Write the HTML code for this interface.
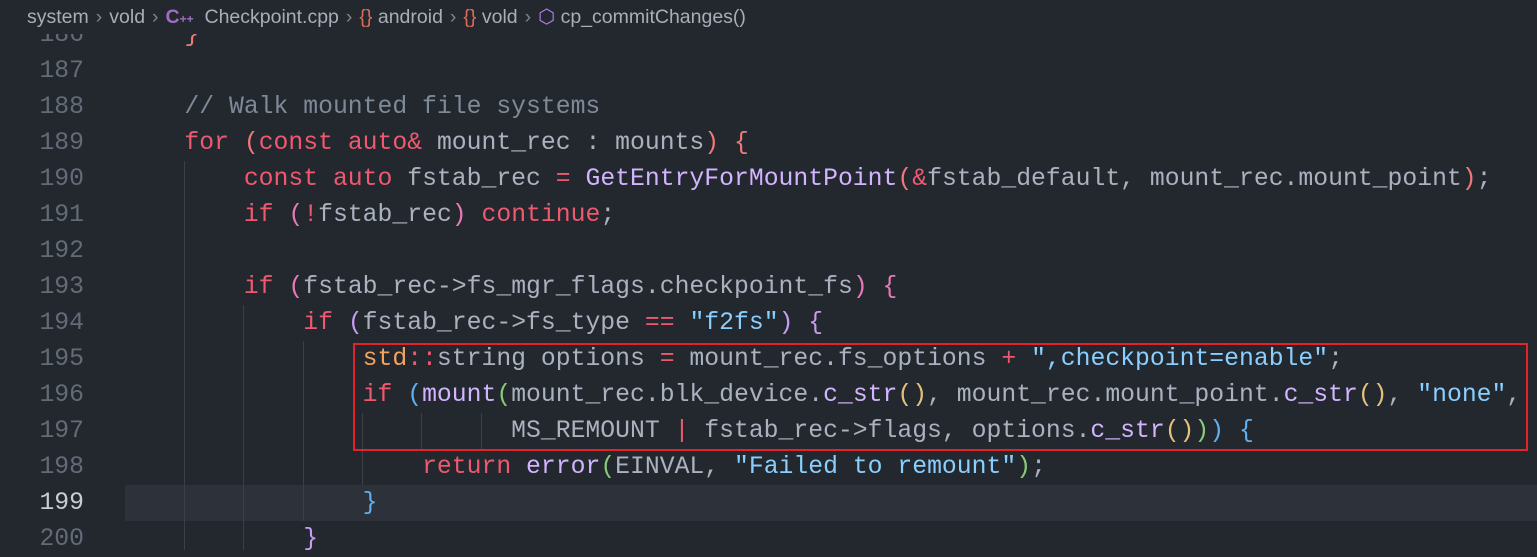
<!DOCTYPE html>
<html><head><meta charset="utf-8"><style>
body{margin:0;width:1537px;height:550px;background:#23272e;overflow:hidden;position:relative;font-family:"Liberation Mono",monospace}
.hdr{position:absolute;left:0;top:0;width:1537px;height:34px;background:#23272e;z-index:5;font-family:"Liberation Sans",sans-serif;font-size:19.5px;color:#a8aeb8;line-height:34px;white-space:pre;padding-left:27px;box-sizing:border-box}
.hdr .s{color:#7d8590;padding:0 7px}
.ln{position:absolute;left:0;width:84px;text-align:right;color:#636b78;font-size:24.75px;line-height:36px;height:36px}
.cd{position:absolute;left:125px;font-size:24.75px;line-height:36px;height:36px;white-space:pre;color:#abb2bf}
.k{color:#ef596f}.c{color:#7f8a98}.f{color:#d2b4ff}.s1{color:#89cfff}.t{color:#f5a35b}
.b1{color:#f07878}.b2{color:#e879b8}.b3{color:#c79bf2}.b4{color:#61afef}.b5{color:#89ca78}.b6{color:#e5c07b}
.g{position:absolute;width:1px;background:#3b4048}
</style></head><body>
<div class="hdr">system<span class="s">›</span>vold<span class="s">›</span><span style="color:#a16cc4;font-weight:bold">C<span style="font-size:12px">++</span></span>  Checkpoint.cpp<span class="s">›</span><span style="color:#e06c5a">{}</span> android<span class="s">›</span><span style="color:#e06c5a">{}</span> vold<span class="s">›</span><span style="color:#b180f0">⬡</span> cp_commitChanges()</div>
<div style="position:absolute;left:125px;top:485px;width:1412px;height:36px;background:#2c313a"></div>
<div class="g" style="left:184px;top:161px;height:389px"></div>
<div class="g" style="left:243px;top:305px;height:245px"></div>
<div class="g" style="left:303px;top:341px;height:180px"></div>
<div class="g" style="left:362px;top:413px;height:72px"></div>
<div class="g" style="left:421px;top:413px;height:36px"></div>
<div class="g" style="left:481px;top:413px;height:36px"></div>

<div class="ln" style="top:17px">186</div><div class="cd" style="top:17px">    <span class="b1">}</span></div>
<div class="ln" style="top:53px">187</div>
<div class="ln" style="top:89px">188</div><div class="cd" style="top:89px">    <span class="c">// Walk mounted file systems</span></div>
<div class="ln" style="top:125px">189</div><div class="cd" style="top:125px">    <span class="k">for</span> <span class="b1">(</span><span class="k">const auto&amp;</span> mount_rec : mounts<span class="b1">)</span> <span class="b1">{</span></div>
<div class="ln" style="top:161px">190</div><div class="cd" style="top:161px">        <span class="k">const auto</span> fstab_rec <span class="k">=</span> <span class="f">GetEntryForMountPoint</span><span class="b1">(</span><span class="k">&amp;</span>fstab_default, mount_rec.mount_point<span class="b1">)</span>;</div>
<div class="ln" style="top:197px">191</div><div class="cd" style="top:197px">        <span class="k">if</span> <span class="b2">(</span><span class="k">!</span>fstab_rec<span class="b2">)</span> <span class="k">continue</span>;</div>
<div class="ln" style="top:233px">192</div>
<div class="ln" style="top:269px">193</div><div class="cd" style="top:269px">        <span class="k">if</span> <span class="b2">(</span>fstab_rec-&gt;fs_mgr_flags.checkpoint_fs<span class="b2">)</span> <span class="b2">{</span></div>
<div class="ln" style="top:305px">194</div><div class="cd" style="top:305px">            <span class="k">if</span> <span class="b3">(</span>fstab_rec-&gt;fs_type <span class="k">==</span> <span class="s1">"f2fs"</span><span class="b3">)</span> <span class="b3">{</span></div>
<div class="ln" style="top:341px">195</div><div class="cd" style="top:341px">                <span class="t">std</span><span class="k">::</span>string options <span class="k">=</span> mount_rec.fs_options <span class="k">+</span> <span class="s1">",checkpoint=enable"</span>;</div>
<div class="ln" style="top:377px">196</div><div class="cd" style="top:377px">                <span class="k">if</span> <span class="b4">(</span><span class="f">mount</span><span class="b5">(</span>mount_rec.blk_device.<span class="f">c_str</span><span class="b6">()</span>, mount_rec.mount_point.<span class="f">c_str</span><span class="b6">()</span>, <span class="s1">"none"</span>,</div>
<div class="ln" style="top:413px">197</div><div class="cd" style="top:413px">                          MS_REMOUNT <span class="k">|</span> fstab_rec-&gt;flags, options.<span class="f">c_str</span><span class="b6">()</span><span class="b5">)</span><span class="b4">)</span> <span class="b4">{</span></div>
<div class="ln" style="top:449px">198</div><div class="cd" style="top:449px">                    <span class="k">return</span> <span class="f">error</span><span class="b5">(</span>EINVAL, <span class="s1">"Failed to remount"</span><span class="b5">)</span>;</div>
<div class="ln" style="top:485px;color:#c8ccd4">199</div><div class="cd" style="top:485px">                <span class="b4">}</span></div>
<div class="ln" style="top:521px">200</div><div class="cd" style="top:521px">            <span class="b3">}</span></div>
<div style="position:absolute;left:353px;top:343px;width:1171px;height:104px;border:2px solid #e5212a"></div>
</body></html>
